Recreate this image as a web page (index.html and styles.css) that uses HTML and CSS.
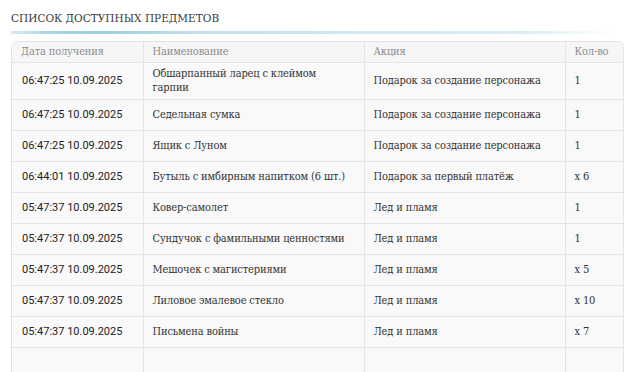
FILE: index.html
```html
<!DOCTYPE html>
<html lang="ru">
<head>
<meta charset="utf-8">
<title>Список доступных предметов</title>
<link rel="stylesheet" href="styles.css">
</head>
<body>
<div class="page">
  <h1 class="title">Список доступных предметов</h1>
  <div class="title-line"></div>
  <div class="table-wrap">
    <table class="items">
      <colgroup>
        <col class="c-date">
        <col class="c-name">
        <col class="c-promo">
        <col class="c-qty">
      </colgroup>
      <thead>
        <tr>
          <th>Дата получения</th>
          <th>Наименование</th>
          <th>Акция</th>
          <th>Кол-во</th>
        </tr>
      </thead>
      <tbody>
        <tr><td class="date">06:47:25 10.09.2025</td><td>Обшарпанный ларец с клеймом гарпии</td><td>Подарок за создание персонажа</td><td>1</td></tr>
        <tr><td class="date">06:47:25 10.09.2025</td><td>Седельная сумка</td><td>Подарок за создание персонажа</td><td>1</td></tr>
        <tr><td class="date">06:47:25 10.09.2025</td><td>Ящик с Луном</td><td>Подарок за создание персонажа</td><td>1</td></tr>
        <tr><td class="date">06:44:01 10.09.2025</td><td>Бутыль с имбирным напитком (6 шт.)</td><td>Подарок за первый платёж</td><td>x 6</td></tr>
        <tr><td class="date">05:47:37 10.09.2025</td><td>Ковер-самолет</td><td>Лед и пламя</td><td>1</td></tr>
        <tr><td class="date">05:47:37 10.09.2025</td><td>Сундучок с фамильными ценностями</td><td>Лед и пламя</td><td>1</td></tr>
        <tr><td class="date">05:47:37 10.09.2025</td><td>Мешочек с магистериями</td><td>Лед и пламя</td><td>x 5</td></tr>
        <tr><td class="date">05:47:37 10.09.2025</td><td>Лиловое эмалевое стекло</td><td>Лед и пламя</td><td>x 10</td></tr>
        <tr><td class="date">05:47:37 10.09.2025</td><td>Письмена войны</td><td>Лед и пламя</td><td>x 7</td></tr>
        <tr class="empty"><td></td><td></td><td></td><td></td></tr>
      </tbody>
    </table>
  </div>
</div>
</body>
</html>
```

FILE: styles.css
```css
html, body {
  margin: 0;
  padding: 0;
  background: #ffffff;
}

.page {
  padding: 10px 13px 0 11px;
  font-family: "DejaVu Serif Condensed", "DejaVu Serif", serif;
  color: #333333;
}

.title {
  margin: 0;
  font-size: 11.7px;
  line-height: 16px;
  font-weight: normal;
  text-transform: uppercase;
  color: #3a3a3a;
}

.title-line {
  margin-top: 5px;
  width: 602px;
  height: 3px;
  background: linear-gradient(to right, #d6ecf2 0%, #a9d6e2 6%, #9ccfdd 15%, #bfe0e9 30%, #cfe7ee 55%, #d9edf3 85%, rgba(230, 244, 248, 0) 100%);
}

.table-wrap {
  margin-top: 7px;
  width: 611px;
  border: 1px solid #e4e4e4;
  border-radius: 6px 6px 0 0;
  overflow: hidden;
  background: #f9f9f9;
}

.items {
  width: 100%;
  border-collapse: collapse;
  table-layout: fixed;
  font-size: 11px;
  letter-spacing: -0.15px;
}

.c-date { width: 131px; }
.c-name { width: 221px; }
.c-promo { width: 201px; }
.c-qty { width: auto; }

.items th,
.items td {
  text-align: left;
  vertical-align: middle;
  padding: 4px 9px;
  line-height: 14px;
  border-right: 1px solid #e4e4e4;
  border-bottom: 1px solid #e4e4e4;
}

.items th:last-child,
.items td:last-child {
  border-right: none;
}

.items th {
  padding-top: 3px;
  padding-bottom: 3px;
  font-weight: normal;
  color: #8c8c8c;
  background: #f6f6f6;
  height: 14px;
}

.items tbody tr {
  height: 31px;
}

.items td {
  color: #333333;
  background: #f9f9f9;
}

.items td.date {
  padding-left: 10px;
  font-family: Roboto, "Liberation Sans", sans-serif;
  font-size: 11px;
  letter-spacing: 0;
  font-weight: normal;
  color: #222222;
}

.items tr.empty {
  height: 40px;
}
```
